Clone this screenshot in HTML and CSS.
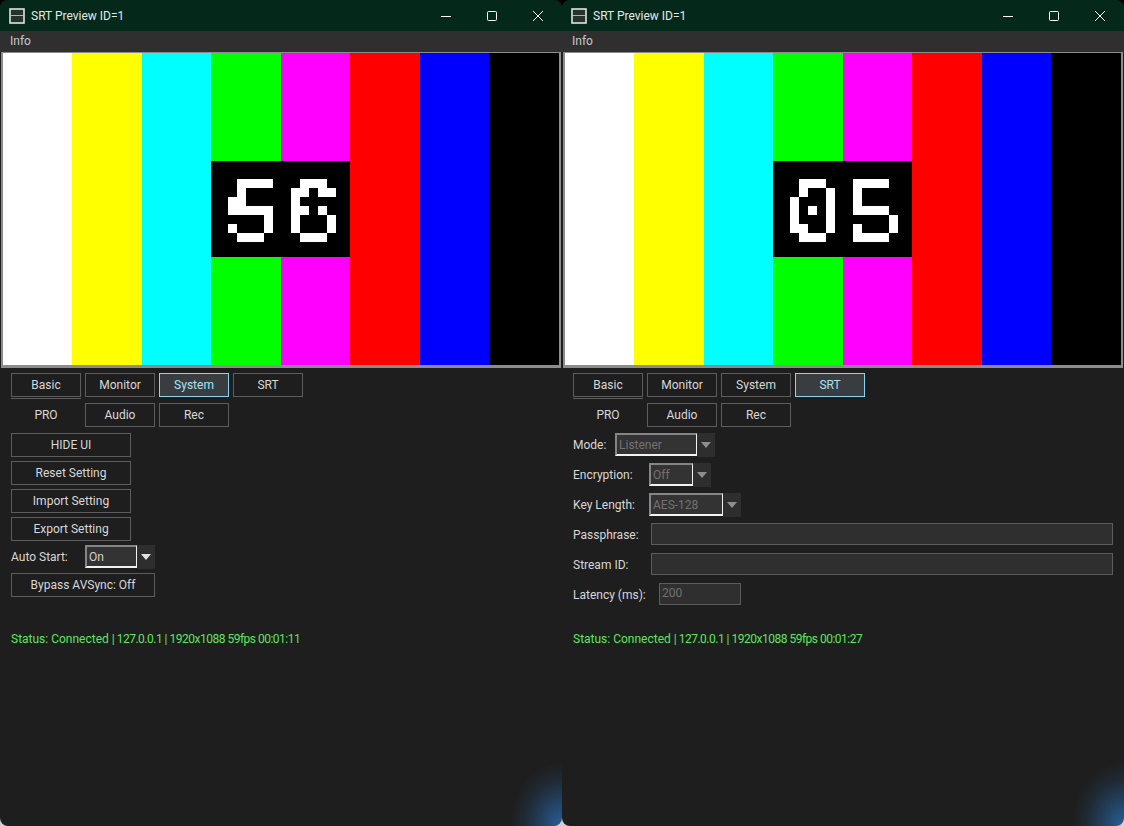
FILE: index.html
```html
<!DOCTYPE html>
<html lang="en">
<head>
<meta charset="utf-8">
<title>SRT Preview</title>
<link rel="stylesheet" href="styles.css">
</head>
<body>
<svg class="defs" width="0" height="0" aria-hidden="true">
  <filter id="pixelate" x="0" y="0" width="100%" height="100%" color-interpolation-filters="sRGB">
    <feFlood x="4" y="4" width="1" height="1" flood-color="#fff"/>
    <feComposite width="9" height="9"/>
    <feTile result="grid"/>
    <feComposite in="SourceGraphic" in2="grid" operator="in"/>
    <feMorphology operator="dilate" radius="4"/>
    <feComponentTransfer>
      <feFuncA type="discrete" tableValues="0 1 1"/>
    </feComponentTransfer>
  </filter>
</svg>
<main class="desktop">
  <section class="window">
    <header class="titlebar">
      <svg class="app-icon" width="16" height="16" viewBox="0 0 16 16"><rect x="1" y="1" width="14" height="14" fill="#26332c" stroke="#dfe5e1" stroke-width="1.6"/><rect x="2" y="7" width="12" height="1" fill="#aab5ae"/></svg>
      <span class="title">SRT Preview ID=1</span>
      <span class="controls">
        <svg width="12" height="12" viewBox="0 0 12 12"><path d="M1 6.5h10" stroke="#fff" fill="none"/></svg>
        <svg width="12" height="12" viewBox="0 0 12 12"><rect x="1.5" y="1.5" width="9" height="9" rx="1" stroke="#fff" fill="none"/></svg>
        <svg width="12" height="12" viewBox="0 0 12 12"><path d="M1 1l10 10M11 1L1 11" stroke="#fff" fill="none"/></svg>
      </span>
    </header>
    <nav class="menubar">Info</nav>
    <div class="preview">
      <div class="bars">
        <i class="white"></i><i class="yellow"></i><i class="cyan"></i><i class="green"></i><i class="magenta"></i><i class="red"></i><i class="blue"></i><i class="black"></i>
      </div>
      <div class="counter"><span class="digits">56</span></div>
    </div>
    <div class="panel">
      <div class="tabs">
        <button class="btn">Basic</button><button class="btn">Monitor</button><button class="btn active">System</button><button class="btn">SRT</button>
        <button class="btn pro">PRO</button><button class="btn">Audio</button><button class="btn">Rec</button>
      </div>
      <div class="stack">
        <button class="btn wide">HIDE UI</button>
        <button class="btn wide">Reset Setting</button>
        <button class="btn wide">Import Setting</button>
        <button class="btn wide">Export Setting</button>
        <div class="row">
          <span class="label auto">Auto Start:</span>
          <span class="select w-on"><span class="value">On</span></span><span class="arrow"></span>
        </div>
        <button class="btn wider">Bypass AVSync: Off</button>
      </div>
      <p class="status status-left">Status: Connected <span class="nums">| 127.0.0.1 | 1920x1088 59fps 00:01:11</span></p>
    </div>
  </section>
  <section class="window">
    <header class="titlebar">
      <svg class="app-icon" width="16" height="16" viewBox="0 0 16 16"><rect x="1" y="1" width="14" height="14" fill="#26332c" stroke="#dfe5e1" stroke-width="1.6"/><rect x="2" y="7" width="12" height="1" fill="#aab5ae"/></svg>
      <span class="title">SRT Preview ID=1</span>
      <span class="controls">
        <svg width="12" height="12" viewBox="0 0 12 12"><path d="M1 6.5h10" stroke="#fff" fill="none"/></svg>
        <svg width="12" height="12" viewBox="0 0 12 12"><rect x="1.5" y="1.5" width="9" height="9" rx="1" stroke="#fff" fill="none"/></svg>
        <svg width="12" height="12" viewBox="0 0 12 12"><path d="M1 1l10 10M11 1L1 11" stroke="#fff" fill="none"/></svg>
      </span>
    </header>
    <nav class="menubar">Info</nav>
    <div class="preview">
      <div class="bars">
        <i class="white"></i><i class="yellow"></i><i class="cyan"></i><i class="green"></i><i class="magenta"></i><i class="red"></i><i class="blue"></i><i class="black"></i>
      </div>
      <div class="counter"><span class="digits">05</span></div>
    </div>
    <div class="panel">
      <div class="tabs">
        <button class="btn">Basic</button><button class="btn">Monitor</button><button class="btn">System</button><button class="btn active">SRT</button>
        <button class="btn pro">PRO</button><button class="btn">Audio</button><button class="btn">Rec</button>
      </div>
      <div class="form">
        <div class="row"><span class="label mode">Mode:</span><span class="select w-mode"><span class="value off">Listener</span></span><span class="arrow dim"></span></div>
        <div class="row"><span class="label enc">Encryption:</span><span class="select w-enc"><span class="value off">Off</span></span><span class="arrow dim"></span></div>
        <div class="row"><span class="label enc">Key Length:</span><span class="select w-key"><span class="value off">AES-128</span></span><span class="arrow dim"></span></div>
        <div class="row"><span class="label pass">Passphrase:</span><span class="input grow"></span></div>
        <div class="row"><span class="label pass">Stream ID:</span><span class="input grow"></span></div>
        <div class="row"><span class="label lat">Latency (ms):</span><span class="input w-lat">200</span></div>
      </div>
      <p class="status status-right">Status: Connected <span class="nums">| 127.0.0.1 | 1920x1088 59fps 00:01:27</span></p>
    </div>
  </section>
</main>
</body>
</html>
```

FILE: styles.css
```css
* { box-sizing: border-box; }
html, body { margin: 0; height: 100%; }
body {
  background: linear-gradient(#000 0 50%, #c9d3dc 50% 100%);
  font-family: Roboto, "Noto Sans", sans-serif;
  font-size: 12px;
  color: #d8d8d8;
  overflow: hidden;
}
.defs { position: absolute; }
.desktop { display: flex; width: 1124px; height: 826px; }
.window {
  width: 562px;
  height: 826px;
  border-radius: 8px;
  overflow: hidden;
  display: flex;
  flex-direction: column;
  background: radial-gradient(ellipse 52px 64px at 100% 100%, #2b5d92 0%, #254f7a 22%, #223d58 45%, #1f2a35 72%, #1e1e1e 100%) #1e1e1e;
}
.titlebar {
  height: 31px;
  flex: none;
  background: #04291a;
  display: flex;
  align-items: center;
  padding-left: 9px;
}
.app-icon { flex: none; }
.title { margin-left: 6px; color: #e4e8e5; font-size: 12px; }
.controls { margin-left: auto; display: flex; gap: 34px; padding-right: 18px; }
.menubar {
  height: 21px;
  flex: none;
  background: #2f2f2f;
  padding-left: 10px;
  line-height: 20px;
  color: #c8c8c8;
}
.preview {
  position: relative;
  height: 316px;
  flex: none;
  margin: 0 1px;
  border: solid #8c8c8c;
  border-width: 1px 2px 3px;
  background: #000;
}
.bars { display: flex; height: 100%; margin: 0 0.1px 0 -0.1px; }
.bars i { flex: 1; }
.white { background: #fff; }
.yellow { background: #ff0; }
.cyan { background: #0ff; }
.green { background: #0f0; }
.magenta { background: #f0f; }
.red { background: #f00; }
.blue { background: #00f; }
.black { background: #000; }
.counter {
  position: absolute;
  left: 208px;
  top: 108px;
  width: 139px;
  height: 96px;
  background: #000;
  display: flex;
  align-items: flex-start;
  justify-content: center;
}
.digits {
  font-family: "Liberation Mono", monospace;
  font-size: 90px;
  line-height: 96px;
  letter-spacing: 6px;
  padding: 9px 0 0 6px;
  margin-left: 3px;
  color: #fff;
  -webkit-text-stroke: 1.5px #fff;
  filter: url(#pixelate);
}
.panel { padding: 5px 11px 0; display: flex; flex-direction: column; flex: 1; }
.btn {
  height: 24px;
  padding: 0 0 1px;
  background: #1e1e1e;
  border: 1px solid #5c5c5c;
  color: #d8d8d8;
  font: inherit;
  text-align: center;
}
.tabs { display: grid; grid-template-columns: repeat(4, 70px); gap: 6px 4px; }
.btn.active { background: #3a3d40; border-color: #8fd3ee; color: #a9e2f7; }
.btn.pro {
  height: 29px;
  margin-top: -5px;
  border-width: 1px 0 0;
  background: transparent;
  padding-top: 4px;
}
.stack { display: flex; flex-direction: column; gap: 4px; margin-top: 6px; align-items: flex-start; }
.wide { width: 120px; }
.wider { width: 144px; }
.row { display: flex; align-items: flex-start; height: 24px; }
.label { line-height: 24px; flex: none; color: #d8d8d8; }
.auto { width: 74px; }
.mode { width: 42px; }
.enc { width: 76px; }
.pass { width: 78px; }
.lat { width: 86px; }
.select {
  height: 23px;
  background: #333;
  border-style: solid;
  border-width: 2px 1px 2px 2px;
  border-color: #858585 #f2f2f2 #f2f2f2 #858585;
  line-height: 20px;
  padding-left: 2px;
}
.value { color: #d0d0d0; }
.value.off { color: #727272; }
.w-on { width: 52px; }
.w-mode { width: 82px; }
.w-enc { width: 44px; }
.w-key { width: 74px; }
.arrow {
  width: 18px;
  height: 24px;
  background: #2e2e2e;
  position: relative;
  flex: none;
}
.arrow::after {
  content: "";
  position: absolute;
  left: 4px;
  top: 9px;
  border: solid transparent;
  border-width: 6px 5px 0;
  border-top-color: #e2e2e2;
}
.arrow.dim::after { border-top-color: #8e8e8e; }
.input {
  height: 22px;
  background: #2f2f2f;
  border: 1px solid #5c5c5c;
  color: #727272;
  line-height: 18px;
  padding-left: 2px;
}
.grow { flex: 1; }
.w-lat { width: 82px; }
.form { display: flex; flex-direction: column; gap: 6px; margin-top: 6px; }
.status { margin: 0; line-height: 16px; color: #5ce65c; }
.nums { letter-spacing: -0.5px; }
.status-left { margin-top: 34px; }
.status-right { margin-top: 24px; }
```
